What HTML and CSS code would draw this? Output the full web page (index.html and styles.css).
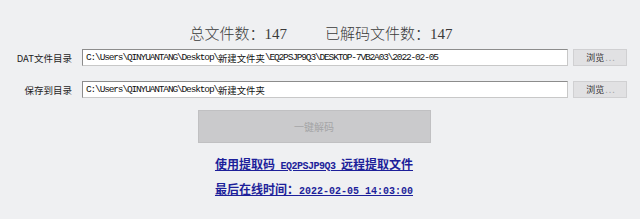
FILE: index.html
```html
<!DOCTYPE html>
<html lang="zh-CN">
<head>
<meta charset="utf-8">
<link rel="stylesheet" href="styles.css">
</head>
<body>
<div class="app">
  <div class="title">
    <span class="stat">总文件数：<span class="num">147</span></span>
    <span class="stat">已解码文件数：<span class="num">147</span></span>
  </div>
  <div class="row row-first">
    <label class="label">DAT文件目录</label>
    <div class="input"><span class="m">C:\Users\QINYUANTANG\Desktop\</span><span class="c">新建文件夹</span><span class="m">\EQ2PSJP9Q3\DESKTOP-7VB2A03\2022-02-05</span></div>
    <div class="browse">浏览<span class="dots">...</span></div>
  </div>
  <div class="row row-second">
    <label class="label">保存到目录</label>
    <div class="input"><span class="m">C:\Users\QINYUANTANG\Desktop\</span><span class="c">新建文件夹</span></div>
    <div class="browse">浏览<span class="dots">...</span></div>
  </div>
  <div class="actions">
    <div class="decode">一键解码</div>
    <a class="link link-first" href="#">使用提取码<span class="la la-tight"> EQ2PSJP9Q3 </span>远程提取文件</a>
    <a class="link link-second" href="#">最后在线时间：<span class="la">2022-02-05 14:03:00</span></a>
  </div>
</div>
</body>
</html>
```

FILE: styles.css
```css
html, body {
  margin: 0;
  padding: 0;
  background: #eff0f2;
}
body {
  width: 640px;
  height: 219px;
  overflow: hidden;
  font-family: "Noto Sans CJK SC", sans-serif;
}
.app {
  display: flex;
  flex-direction: column;
  padding-top: 24px;
}
.title {
  display: flex;
  justify-content: center;
  gap: 38px;
  height: 20px;
  line-height: 20px;
  font-size: 15px;
  color: #3a3a3a;
  padding-left: 2px;
}
.stat {
  font-family: "Liberation Serif", "Noto Sans CJK SC", serif;
  font-weight: 300;
}
.num {
  font-family: "Liberation Serif", serif;
  font-weight: 400;
}
.row {
  display: flex;
  align-items: center;
  height: 17px;
}
.row-first { margin-top: 5px; }
.row-second { margin-top: 15px; }
.label {
  width: 72px;
  text-align: right;
  font-size: 9.5px;
  color: #1e1e1e;
  white-space: nowrap;
  margin-right: 10px;
}
.input {
  box-sizing: border-box;
  width: 486px;
  height: 17px;
  background: #fff;
  border: 1px solid #8c8c8c;
  border-right-color: #c8c8c8;
  border-bottom-color: #c8c8c8;
  padding-left: 3px;
  display: flex;
  align-items: center;
  white-space: nowrap;
  overflow: hidden;
  color: #111;
}
.m {
  font-family: "Liberation Mono", monospace;
  font-size: 9.5px;
  letter-spacing: -1.15px;
}
.c {
  font-family: "Noto Sans CJK SC", sans-serif;
  font-size: 9.4px;
}
.browse {
  box-sizing: border-box;
  width: 54px;
  height: 17px;
  margin-left: 5px;
  background: #e1e1e3;
  border: 1px solid #d0d0d2;
  font-size: 9px;
  color: #333;
  display: flex;
  align-items: center;
  justify-content: center;
  padding-left: 2px;
}
.dots {
  color: #a8a8a8;
  letter-spacing: 1px;
  margin-left: 1px;
}
.actions {
  width: 628px;
  display: flex;
  flex-direction: column;
  align-items: center;
}
.decode {
  box-sizing: border-box;
  margin-top: 12px;
  width: 233px;
  height: 33px;
  background: #cacacc;
  border: 1px solid #c0c0c2;
  color: #a4a4a6;
  font-size: 10px;
  display: flex;
  align-items: center;
  justify-content: center;
}
.link {
  display: block;
  font-size: 12px;
  line-height: 16px;
  font-weight: 700;
  color: #1d1f9a;
  text-decoration: underline;
  white-space: nowrap;
}
.link-first { margin-top: 13px; }
.link-second { margin-top: 6px; }
.la {
  font-family: "Liberation Mono", monospace;
  font-size: 10px;
  white-space: pre;
}
.la-tight {
  letter-spacing: -0.5px;
}
```
